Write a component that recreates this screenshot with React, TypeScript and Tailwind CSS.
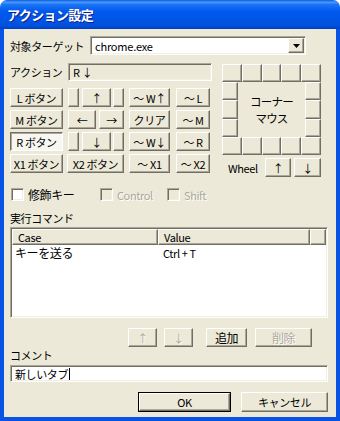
import type { ReactNode } from 'react';

const raised =
  'border border-t-white border-l-white border-r-[#716f64] border-b-[#716f64] shadow-[inset_-1px_-1px_0_#aca899] bg-[#ece9d8]';
const pushed =
  'border border-t-[#716f64] border-l-[#716f64] border-r-white border-b-white shadow-[inset_1px_1px_0_#aca899] bg-[#f7f6f1]';
const sunken =
  'border border-t-[#aca899] border-l-[#aca899] border-r-white border-b-white shadow-[inset_1px_1px_0_#716f64,inset_-1px_-1px_0_#f1efe2]';
const dim = 'text-[#aca899] [text-shadow:1px_1px_0_#fff]';

function Btn({
  children,
  className = '',
  down = false,
  disabled = false,
}: {
  children?: ReactNode;
  className?: string;
  down?: boolean;
  disabled?: boolean;
}) {
  return (
    <div
      className={`flex items-center justify-center shrink-0 whitespace-nowrap ${down ? pushed : raised} ${
        disabled ? dim : 'text-black'
      } ${className}`}
    >
      {children}
    </div>
  );
}

function Check({ disabled = false }: { disabled?: boolean }) {
  return <div className={`w-[13px] h-[13px] shrink-0 ${sunken} ${disabled ? 'bg-[#ece9d8]' : 'bg-white'}`} />;
}

function CornerPanel() {
  return (
    <div className="ml-[10px] mt-[1px] w-[99px] flex flex-col">
      <div className="flex h-[18px]">
        <Btn className="w-[20px]" />
        <Btn className="flex-1" />
        <Btn className="flex-1" />
        <Btn className="flex-1" />
        <Btn className="w-[20px]" />
      </div>
      <div className="flex h-[55px]">
        <div className="flex flex-col w-[16px]">
          <Btn className="flex-1" />
          <Btn className="flex-1" />
          <Btn className="flex-1" />
        </div>
        <div className="flex-1 flex items-center justify-center">
          <div className="text-center text-[11.5px] leading-[17px] tracking-[-0.8px]">
            コーナー
            <br />
            マウス
          </div>
        </div>
        <div className="flex flex-col w-[16px]">
          <Btn className="flex-1" />
          <Btn className="flex-1" />
          <Btn className="flex-1" />
        </div>
      </div>
      <div className="flex h-[18px]">
        <Btn className="w-[20px]" />
        <Btn className="flex-1" />
        <Btn className="flex-1" />
        <Btn className="flex-1" />
        <Btn className="w-[20px]" />
      </div>
      <div className="mt-[3px] flex items-center h-[19px]">
        <span className="ml-[6px]">Wheel</span>
        <Btn className="w-[26px] h-full ml-auto">↑</Btn>
        <Btn className="w-[27px] h-full ml-[3px]">↓</Btn>
      </div>
    </div>
  );
}

export default function App() {
  return (
    <div className="w-[340px] h-[421px] bg-white font-['Noto_Sans_CJK_JP',sans-serif] text-[11px] leading-[14px] tracking-[-0.4px] text-black select-none whitespace-nowrap">
      {/* title bar */}
      <div className="h-[29px] rounded-t-[7px] bg-[linear-gradient(180deg,#0a5fe0_0%,#4a97fd_8%,#1a74f5_16%,#0058ee_40%,#0055e5_70%,#0052dd_88%,#0040c4_100%)] flex items-center pl-[7px] pt-[1px]">
        <span className="text-white font-bold text-[13px] tracking-[-0.6px] [text-shadow:1px_1px_0_#0f1f8a]">
          アクション設定
        </span>
      </div>

      <div className="h-[392px] border-x-4 border-b-4 border-[#0852e4] bg-[#ece9d8] flex flex-col">
        {/* target */}
        <div className="mt-[7px] ml-[6px] flex items-center h-[19px]">
          <span className="w-[80px]">対象ターゲット</span>
          <div className={`w-[216px] h-[19px] bg-white p-[1px] flex items-center ${sunken}`}>
            <span className="pl-[3px] flex-1 tracking-[-0.2px]">chrome.exe</span>
            <Btn className="w-[16px] h-full">
              <svg width="7" height="4" viewBox="0 0 7 4">
                <path d="M0 0h7L3.5 4z" fill="#000" />
              </svg>
            </Btn>
          </div>
        </div>

        {/* action area */}
        <div className="mt-[8px] ml-[6px] flex">
          <div className="w-[202px] flex flex-col">
            <div className="flex items-center h-[18px]">
              <span className="w-[58px]">アクション</span>
              <div className={`w-[144px] h-[18px] pl-[4px] flex items-center ${sunken} bg-[#ece9d8]`}>R ↓</div>
            </div>
            <div className="mt-[7px] flex flex-col gap-[3px]">
              <div className="flex h-[19px]">
                <Btn className="w-[53px]">L ボタン</Btn>
                <Btn className="w-[11px] ml-[5px]" />
                <Btn className="w-[29px] ml-[3px]">↑</Btn>
                <Btn className="w-[11px] ml-[2px]" />
                <Btn className="w-[41px] ml-[5px]">～ W↑</Btn>
                <Btn className="w-[34px] ml-[6px]">～ L</Btn>
              </div>
              <div className="flex h-[19px]">
                <Btn className="w-[53px]">M ボタン</Btn>
                <Btn className="w-[28px] ml-[5px]">←</Btn>
                <Btn className="w-[25px] ml-[3px]">→</Btn>
                <Btn className="w-[41px] ml-[5px]">クリア</Btn>
                <Btn className="w-[34px] ml-[6px]">～ M</Btn>
              </div>
              <div className="flex h-[19px]">
                <Btn className="w-[53px]" down>
                  R ボタン
                </Btn>
                <Btn className="w-[11px] ml-[5px]" />
                <Btn className="w-[29px] ml-[3px]">↓</Btn>
                <Btn className="w-[11px] ml-[2px]" />
                <Btn className="w-[41px] ml-[5px]">～ W↓</Btn>
                <Btn className="w-[34px] ml-[6px]">～ R</Btn>
              </div>
              <div className="flex h-[19px]">
                <Btn className="w-[53px]">X1 ボタン</Btn>
                <Btn className="w-[57px] ml-[4px]">X2 ボタン</Btn>
                <Btn className="w-[41px] ml-[5px]">～ X1</Btn>
                <Btn className="w-[34px] ml-[6px]">～ X2</Btn>
              </div>
            </div>
          </div>
          <CornerPanel />
        </div>

        {/* modifier checkboxes */}
        <div className="mt-[11px] ml-[7px] flex items-center h-[13px]">
          <div className="w-[89px] flex items-center gap-[4px]">
            <Check />
            <span className="text-[12px]">修飾キー</span>
          </div>
          <div className="w-[67px] flex items-center gap-[4px]">
            <Check disabled />
            <span className={dim}>Control</span>
          </div>
          <div className="flex items-center gap-[4px]">
            <Check disabled />
            <span className={dim}>Shift</span>
          </div>
        </div>

        {/* command list */}
        <div className="mt-[10px] ml-[6px] h-[14px]">実行コマンド</div>
        <div className={`mt-[2px] ml-[6px] w-[318px] h-[91px] bg-white p-[1px] flex flex-col ${sunken}`}>
          <div className="flex h-[16px] shrink-0">
            <div className={`w-[146px] flex items-center pl-[5px] ${raised}`}>Case</div>
            <div className={`w-[152px] flex items-center pl-[5px] ${raised}`}>Value</div>
            <div className={`flex-1 ${raised}`} />
          </div>
          <div className="flex h-[14px] mt-[1px]">
            <div className="w-[146px] pl-[3px] text-[12px]">キーを送る</div>
            <div className="pl-[5px]">Ctrl + T</div>
          </div>
        </div>

        <div className="mt-[10px] ml-[124px] flex h-[19px]">
          <Btn className="w-[29px]" disabled>
            ↑
          </Btn>
          <Btn className="w-[29px] ml-[7px]" disabled>
            ↓
          </Btn>
          <Btn className="w-[41px] ml-[13px] text-[12px]">追加</Btn>
          <Btn className="w-[57px] ml-[8px] text-[12px]" disabled>
            削除
          </Btn>
        </div>

        {/* comment */}
        <div className="mt-[1px] ml-[6px] h-[14px]">コメント</div>
        <div className={`mt-[3px] ml-[6px] w-[318px] h-[17px] bg-white flex items-center pl-[4px] ${sunken}`}>
          <span>新しいタブ</span>
          <span className="w-[1px] h-[12px] bg-black ml-[1px]" />
        </div>

        <div className="mt-[10px] ml-[134px] flex h-[20px]">
          <div className="w-[93px] border border-black flex">
            <Btn className="flex-1">OK</Btn>
          </div>
          <Btn className="w-[87px] ml-[10px]">キャンセル</Btn>
        </div>
      </div>
    </div>
  );
}
